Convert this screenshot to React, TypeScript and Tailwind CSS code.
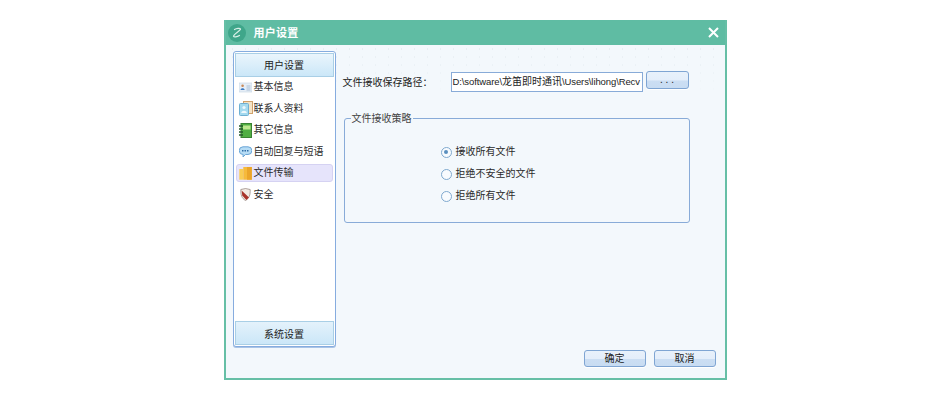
import React from "react";

const FONT = "font-['Liberation_Sans','Noto_Sans_CJK_SC',sans-serif]";

function IconCard() {
  return (
    <svg width="13" height="11" viewBox="0 0 13 11">
      <rect x="0" y="1" width="13" height="9" fill="#e6eef7" stroke="#c3d2e2" strokeWidth="0.6" />
      <circle cx="3.600" cy="3.800" r="1.300" fill="#c98a5a" />
      <path d="M1.500 8c.3-2.200 3.900-2.200 4.200 0z" fill="#3f7cc4" />
      <path d="M7.500 4h4M7.500 6h4M7.500 8h4" stroke="#a9bdd3" />
    </svg>
  );
}
function IconContacts() {
  return (
    <svg width="14" height="15" viewBox="0 0 14 15">
      <rect x="4.500" y="0.500" width="9" height="12" fill="#f4e3c6" stroke="#d0a26b" />
      <rect x="0.500" y="2.500" width="9" height="12" rx="1" fill="#a4daef" stroke="#6fb0d2" />
      <circle cx="5" cy="6.500" r="1.600" fill="#eef8fc" />
      <path d="M2.200 12c.3-3 5.300-3 5.600 0z" fill="#eef8fc" />
    </svg>
  );
}
function IconBook() {
  return (
    <svg width="13" height="15" viewBox="0 0 13 15">
      <rect x="2" y="0.500" width="10.500" height="14" fill="#4fae42" stroke="#3a8233" />
      <rect x="4" y="2.500" width="7.500" height="4" fill="#bde88f" />
      <path d="M0 3h4M0 6h4M0 9h4M0 12h4" stroke="#24582a" strokeWidth="1.300" />
    </svg>
  );
}
function IconChat() {
  return (
    <svg width="13" height="12" viewBox="0 0 13 12">
      <path d="M4 .8h5a3.600 3.600 0 0 1 0 7.700H6.500L4 11l.2-2.500A3.800 3.800 0 0 1 4 .8z" fill="#b6dcf5" stroke="#6ba6d6" />
      <path d="M3 4.700h7" stroke="#2f6da6" strokeWidth="1.600" strokeDasharray="1.500 1" />
    </svg>
  );
}
function IconFolder() {
  return (
    <svg width="13" height="14" viewBox="0 0 13 14">
      <rect x="0.300" y="3" width="4" height="10.700" fill="#f9cd55" />
      <rect x="4.300" y="1" width="8.500" height="12.700" fill="#f6ba3c" />
      <rect x="8" y="1" width="4.800" height="12.700" fill="#eba52a" />
    </svg>
  );
}
function IconShield() {
  return (
    <svg width="11" height="13" viewBox="0 0 11 13">
      <path d="M.8 1.500 5.500.5l4.700 1c.2 5-.8 8.800-4.700 11C1.600 10.300.6 6.500.8 1.500z" fill="#f2ebe4" stroke="#7f6d66" strokeWidth="0.6" />
      <path d="M1.600 2.500 9 9.500 6.300 12 2.300 7.500z" fill="#a8332a" />
    </svg>
  );
}
function Logo() {
  return (
    <svg width="18" height="18" viewBox="0 0 18 18">
      <circle cx="9" cy="9" r="9" fill="#3fa68a" />
      <path d="M6.500 5.500c2-1.200 5.500-1.600 6-.6C13 6.500 6 9.500 5.500 12.300c.5 1 3.500.7 6-.8" fill="none" stroke="#d9f0e8" strokeWidth="1.200" strokeLinecap="round" />
    </svg>
  );
}
function CloseX() {
  return (
    <svg width="11" height="11" viewBox="0 0 11 11">
      <path d="M1 1l9 9M10 1l-9 9" stroke="#fff" strokeWidth="2" />
    </svg>
  );
}

function NavItem({ icon, label, active }: { icon: React.ReactNode; label: string; active?: boolean }) {
  return (
    <div
      className={`flex h-[18px] items-center rounded-[3px] border ${active ? "border-[#d5d2f2] bg-[#e6e4fb]" : "border-transparent"}`}
    >
      <span className="flex w-[16px] shrink-0 items-center justify-center pl-[2px]">{icon}</span>
      <span className="ml-[1px] text-[10px] leading-none text-[#2a2a2a]">{label}</span>
    </div>
  );
}

function SideHeader({ label, className }: { label: string; className: string }) {
  return (
    <div
      className={`flex h-[24px] items-center justify-center border border-[#a9cfe6] bg-gradient-to-b text-[10px] text-[#222] ${className}`}
    >
      {label}
    </div>
  );
}

function Radio({ checked, label }: { checked?: boolean; label: string }) {
  return (
    <div className="flex h-[12px] items-center gap-[4px]">
      <span className="flex size-[11px] items-center justify-center rounded-full border border-[#7fa9cf] bg-[#f8fbfe]">
        {checked && <span className="size-[4px] rounded-full bg-[#5a8fbf]" />}
      </span>
      <span className="text-[10px] leading-none text-[#2a2a2a]">{label}</span>
    </div>
  );
}

function PushButton({ label, className }: { label: React.ReactNode; className: string }) {
  return (
    <div
      className={`flex items-center justify-center rounded-[3px] border border-[#7fa5d3] bg-[linear-gradient(#e8f1fb_0%,#e4eefa_50%,#cbdef3_56%,#c8dcf2_100%)] text-[10px] leading-none text-[#222] shadow-[0_1px_0_#ffffff] ${className}`}
    >
      {label}
    </div>
  );
}

export default function App() {
  return (
    <div className={`flex h-[400px] w-[950px] justify-center bg-white pt-[20px] ${FONT}`}>
      <div className="flex h-[360px] w-[503px] flex-col border-x-2 border-b-2 border-[#66bfa6] bg-[#f3f8fc]">
        <div className="flex h-[25px] shrink-0 items-center bg-[#5fbca3] pl-[2px] pr-[6px]">
          <Logo />
          <span className="ml-[8px] pt-[2px] text-[11px] font-bold tracking-[0.250px] text-white">用户设置</span>
          <span className="ml-auto flex"><CloseX /></span>
        </div>
        <div className="relative flex flex-1 flex-col pl-[7px] pr-[9px] pt-[6px]">
          <div className="absolute inset-x-0 top-0 h-[50px] bg-[radial-gradient(#dfe7ec_0.7px,transparent_1px)] bg-[size:13px_8px] [mask-image:linear-gradient(#000,transparent)]" />
          <div className="relative flex h-[296px] gap-[7px]">
            <div className="flex w-[103px] shrink-0 flex-col rounded-[3px] border border-[#86acdf] bg-white p-px shadow-[0_1px_0_#a9c4e6]">
              <SideHeader label="用户设置" className="from-[#eaf5fc] to-[#cbe7f8]" />
              <div className="flex flex-1 flex-col gap-[3.600px] px-[1px] pt-[1px]">
                <NavItem icon={<IconCard />} label="基本信息" />
                <NavItem icon={<IconContacts />} label="联系人资料" />
                <NavItem icon={<IconBook />} label="其它信息" />
                <NavItem icon={<IconChat />} label="自动回复与短语" />
                <NavItem icon={<IconFolder />} label="文件传输" active />
                <NavItem icon={<IconShield />} label="安全" />
              </div>
              <SideHeader label="系统设置" className="from-[#e4f2fb] to-[#cbe7f8] pt-[2px]" />
            </div>
            <div className="flex min-w-0 flex-1 flex-col pt-[21px]">
              <div className="flex items-start">
                <span className="w-[108px] pt-[5px] text-[10px] leading-[12px] text-[#222]">文件接收保存路径：</span>
                <div className="flex h-[20px] w-[192px] items-center overflow-hidden whitespace-nowrap border border-[#88abd8] bg-white pl-[1px] text-[9.500px] leading-none tracking-[-0.100px] text-[#222]">
                  D:\software\<span className="text-[10px] tracking-normal">龙笛即时通讯</span>\Users\lihong\Recv
                </div>
                <PushButton label=". . ." className="ml-[3px] h-[18px] w-[43px] -translate-y-px" />
              </div>
              <div className="relative ml-[1px] mt-[26px] flex h-[105px] w-[346px] flex-col items-center rounded-[3px] border border-[#88abd8] pt-[27px]">
                <span className="absolute -top-[6px] left-[6px] bg-[#f3f8fc] px-px text-[10px] leading-[12px] text-[#444]">文件接收策略</span>
                <div className="ml-[-42px] flex w-[110px] flex-col gap-[10px]">
                  <Radio checked label="接收所有文件" />
                  <Radio label="拒绝不安全的文件" />
                  <Radio label="拒绝所有文件" />
                </div>
              </div>
            </div>
          </div>
          <div className="relative mt-[3px] flex justify-end gap-[8px]">
            <PushButton label="确定" className="h-[17px] w-[62px]" />
            <PushButton label="取消" className="h-[17px] w-[62px]" />
          </div>
        </div>
      </div>
    </div>
  );
}
